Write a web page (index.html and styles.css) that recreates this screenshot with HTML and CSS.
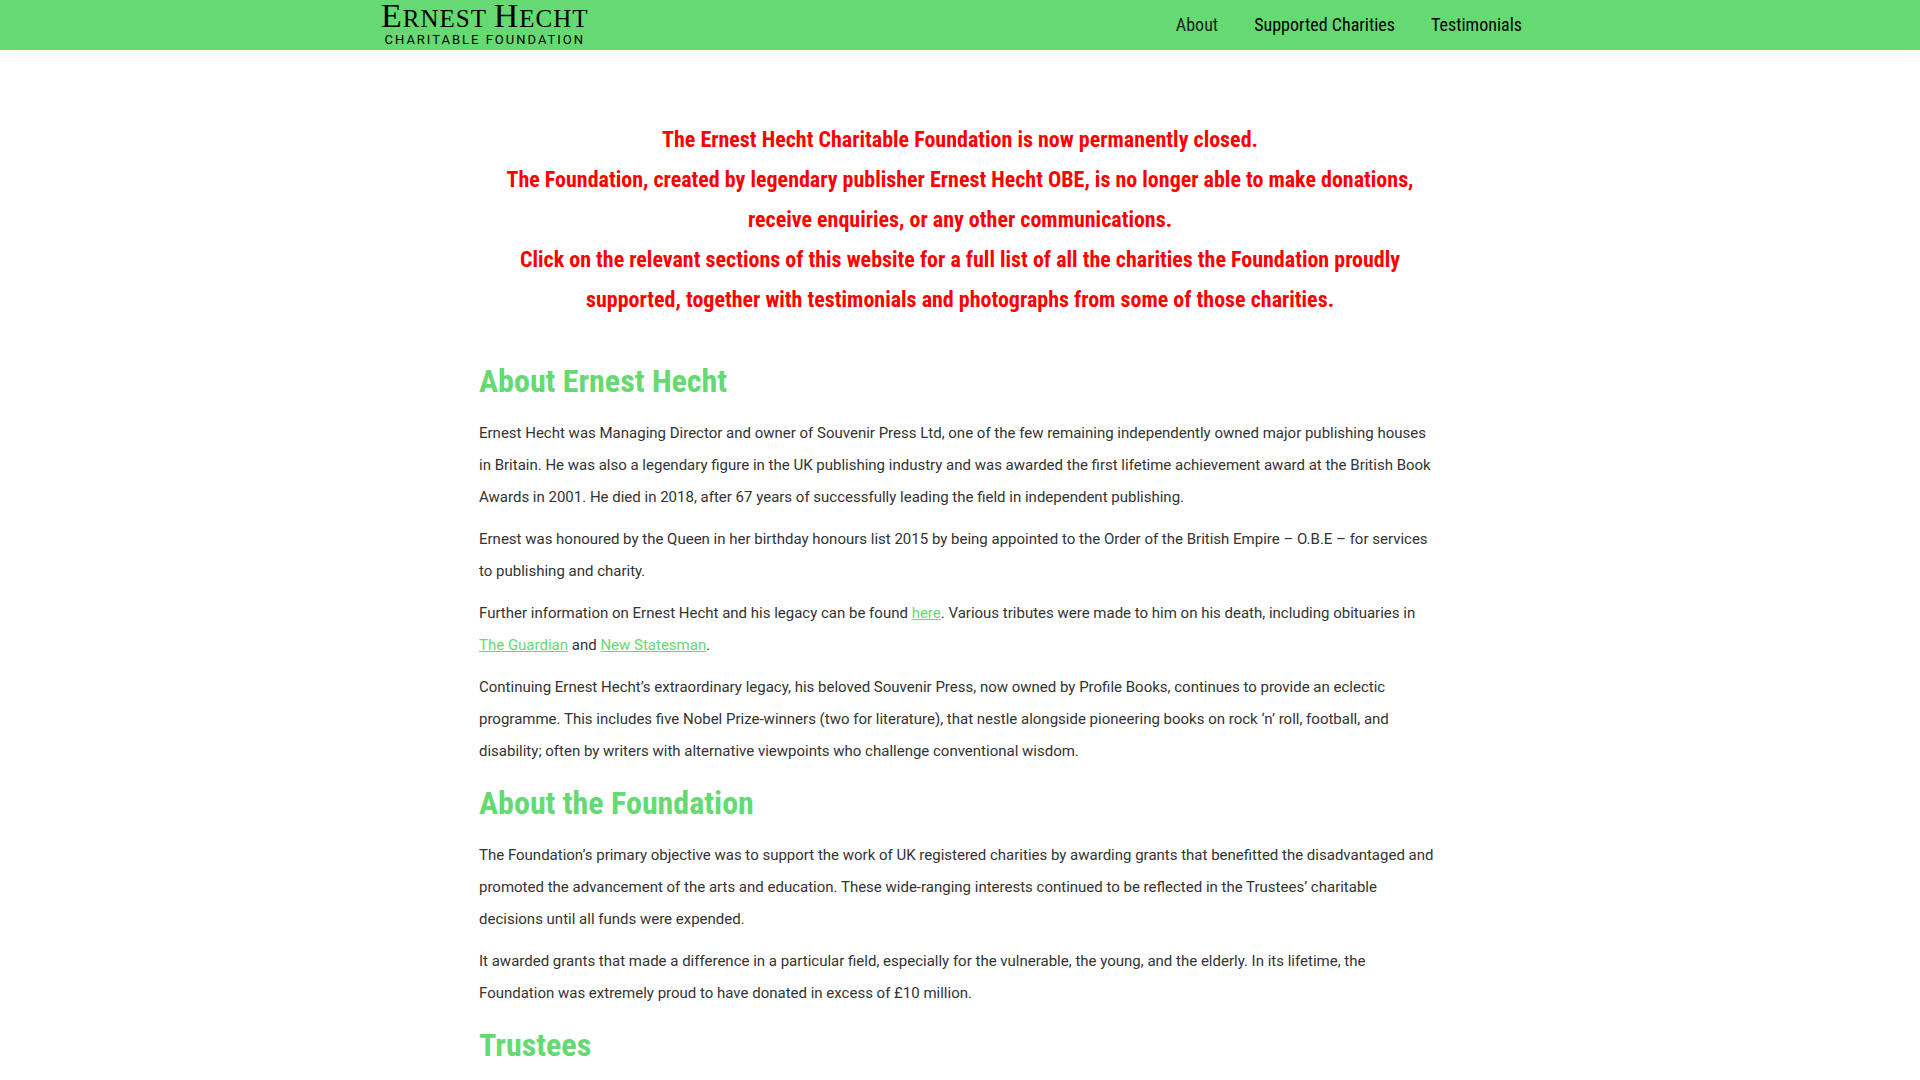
FILE: index.html
```html
<!DOCTYPE html>
<html lang="en">
<head>
<meta charset="utf-8">
<meta name="viewport" content="width=device-width, initial-scale=1">
<title>Ernest Hecht Charitable Foundation</title>
<link rel="stylesheet" href="styles.css">
</head>
<body>
<header class="site-header">
  <div class="header-inner">
    <a class="logo" href="#">
      <span class="logo-name"><span class="logo-cap">E</span>RNEST <span class="logo-cap">H</span>ECHT</span>
      <span class="logo-sub">CHARITABLE FOUNDATION</span>
    </a>
    <nav class="site-nav">
      <a class="nav-link current" href="#">About</a>
      <a class="nav-link" href="#">Supported Charities</a>
      <a class="nav-link" href="#">Testimonials</a>
    </nav>
  </div>
</header>
<main class="content">
  <div class="notice">
    <p>The Ernest Hecht Charitable Foundation is now permanently closed.</p>
    <p>The Foundation, created by legendary publisher Ernest Hecht OBE, is no longer able to make donations, receive enquiries, or any other communications.</p>
    <p>Click on the relevant sections of this website for a full list of all the charities the Foundation proudly supported, together with testimonials and photographs from some of those charities.</p>
  </div>
  <section class="article">
    <h2>About Ernest Hecht</h2>
    <p>Ernest Hecht was Managing Director and owner of Souvenir Press Ltd, one of the few remaining independently owned major publishing houses in Britain. He was also a legendary figure in the UK publishing industry and was awarded the first lifetime achievement award at the British Book Awards in 2001. He died in 2018, after 67 years of successfully leading the field in independent publishing.</p>
    <p>Ernest was honoured by the Queen in her birthday honours list 2015 by being appointed to the Order of the British Empire – O.B.E – for services to publishing and charity.</p>
    <p>Further information on Ernest Hecht and his legacy can be found <a href="#">here</a>. Various tributes were made to him on his death, including obituaries in <a href="#">The Guardian</a> and <a href="#">New Statesman</a>.</p>
    <p>Continuing Ernest Hecht’s extraordinary legacy, his beloved Souvenir Press, now owned by Profile Books, continues to provide an eclectic programme. This includes five Nobel Prize-winners (two for literature), that nestle alongside pioneering books on rock ‘n’ roll, football, and disability; often by writers with alternative viewpoints who challenge conventional wisdom.</p>
    <h2>About the Foundation</h2>
    <p>The Foundation’s primary objective was to support the work of UK registered charities by awarding grants that benefitted the disadvantaged and promoted the advancement of the arts and education. These wide-ranging interests continued to be reflected in the Trustees’ charitable decisions until all funds were expended.</p>
    <p>It awarded grants that made a difference in a particular field, especially for the vulnerable, the young, and the elderly. In its lifetime, the Foundation was extremely proud to have donated in excess of £10 million.</p>
    <h2>Trustees</h2>
  </section>
</main>
</body>
</html>
```
FILE: styles.css
```css
* {
  box-sizing: border-box;
}

body {
  margin: 0;
  background: #fff;
  color: #333;
  font: 15px/32px Roboto, sans-serif;
}

.site-header {
  background: #65da72;
  box-shadow: 0 0 20px rgba(0, 0, 0, 0.05);
}

.header-inner {
  display: flex;
  align-items: center;
  justify-content: space-between;
  max-width: 1160px;
  min-height: 50px;
  margin: 0 auto;
}

.logo {
  display: flex;
  flex-direction: column;
  align-items: center;
  padding: 0 0 4px 1px;
  color: #000;
  text-decoration: none;
}

.logo-name {
  font: 25px/30px "Liberation Serif", serif;
  letter-spacing: 1px;
}

.logo-cap {
  font-size: 34px;
}

.logo-sub {
  font: 13px/12px Roboto, sans-serif;
  letter-spacing: 2px;
}

.site-nav {
  display: flex;
  flex-wrap: wrap;
}

.nav-link {
  padding: 0 18px;
  color: #000;
  font: 18px/50px "Roboto Condensed", sans-serif;
  text-decoration: none;
}

.nav-link.current {
  color: #222;
}

.content {
  max-width: 962px;
  margin: 0 auto;
  padding: 70px 0 40px;
}

.notice {
  margin-bottom: 25px;
  color: #f00;
  font: 700 22px/40px "Roboto Condensed", sans-serif;
  text-align: center;
}

.notice p {
  margin: 0;
}

.article {
  display: flow-root;
}

.article h2 {
  margin: 10px 0;
  color: #65da72;
  font: 700 32px/52px "Roboto Condensed", sans-serif;
}

.article h2:first-child {
  margin-top: 0;
  padding-top: 10px;
}

.article p {
  margin: 0 0 10px;
}

.article a {
  color: #65da72;
}
```
